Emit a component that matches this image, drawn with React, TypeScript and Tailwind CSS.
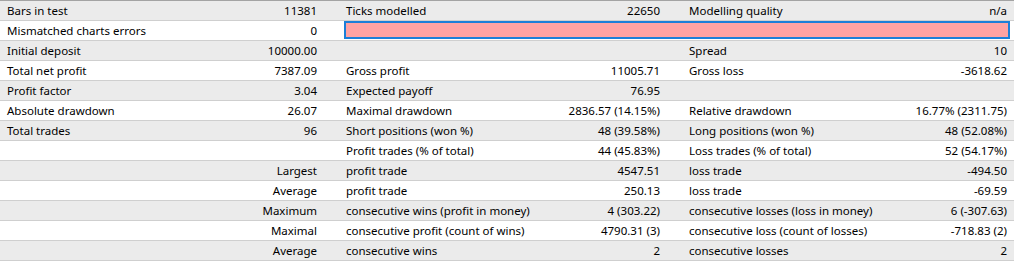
type Row = [string, string, string, string, string, string]

const rows: Row[] = [
  ['Bars in test', '11381', 'Ticks modelled', '22650', 'Modelling quality', 'n/a'],
  ['Mismatched charts errors', '0', '', '', '', ''],
  ['Initial deposit', '10000.00', '', '', 'Spread', '10'],
  ['Total net profit', '7387.09', 'Gross profit', '11005.71', 'Gross loss', '-3618.62'],
  ['Profit factor', '3.04', 'Expected payoff', '76.95', '', ''],
  ['Absolute drawdown', '26.07', 'Maximal drawdown', '2836.57 (14.15%)', 'Relative drawdown', '16.77% (2311.75)'],
  ['Total trades', '96', 'Short positions (won %)', '48 (39.58%)', 'Long positions (won %)', '48 (52.08%)'],
  ['', '', 'Profit trades (% of total)', '44 (45.83%)', 'Loss trades (% of total)', '52 (54.17%)'],
  ['', 'Largest', 'profit trade', '4547.51', 'loss trade', '-494.50'],
  ['', 'Average', 'profit trade', '250.13', 'loss trade', '-69.59'],
  ['', 'Maximum', 'consecutive wins (profit in money)', '4 (303.22)', 'consecutive losses (loss in money)', '6 (-307.63)'],
  ['', 'Maximal', 'consecutive profit (count of wins)', '4790.31 (3)', 'consecutive loss (count of losses)', '-718.83 (2)'],
  ['', 'Average', 'consecutive wins', '2', 'consecutive losses', '2'],
]

function Label({ text }: { text: string }) {
  return <div className="pl-[7px] whitespace-nowrap">{text}</div>
}

function Value({ text, last }: { text: string; last?: boolean }) {
  return (
    <div className={last ? 'pr-[7px] flex justify-end whitespace-nowrap' : 'pr-[22px] flex justify-end whitespace-nowrap'}>
      {text}
    </div>
  )
}

export default function App() {
  return (
    <div
      className="w-[1014px] h-[279px] bg-white text-[11.5px] text-black overflow-hidden"
      style={{ fontFamily: '"Noto Sans", "Open Sans", sans-serif' }}
    >
      <div className="border-t border-[#a3a3a3]">
        {rows.map((r, i) => (
          <div
            key={i}
            className={
              'grid grid-cols-[220px_119px_220px_123px_220px_1fr] h-[20px] items-center border-b border-[#cfcfcf] ' +
              (i % 2 === 0 ? 'bg-[#ebebeb]' : 'bg-white')
            }
          >
            <Label text={r[0]} />
            <Value text={r[1]} />
            {i === 1 ? (
              <div className="col-span-4 self-start pl-[5px] pr-[4px]">
                <div className="h-[18px] border-2 border-[#1c7fd8] bg-[#ffa3a3]" />
              </div>
            ) : (
              <>
                <Label text={r[2]} />
                <Value text={r[3]} />
                <Label text={r[4]} />
                <Value text={r[5]} last />
              </>
            )}
          </div>
        ))}
      </div>
    </div>
  )
}
